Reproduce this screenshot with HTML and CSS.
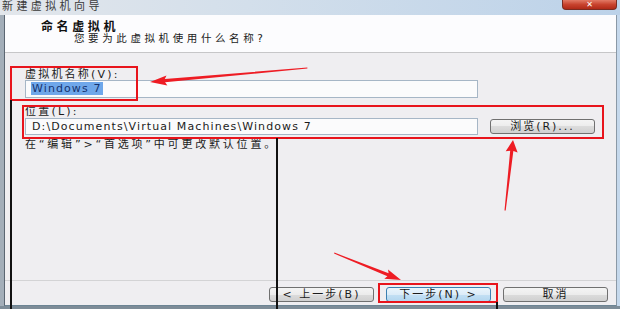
FILE: index.html
```html
<!DOCTYPE html>
<html lang="zh-CN">
<head>
    <meta charset="UTF-8">
    <meta name="viewport" content="width=device-width, initial-scale=1.0">
    <title>新建虚拟机向导</title>
    <link rel="stylesheet" href="styles.css">
</head>
<body>
    <div class="window">
        <div class="titlebar">
            <span class="title">新建虚拟机向导</span>
            <span class="close">✕</span>
        </div>

        <div class="dialog">
            <header class="head">
                <h1 class="head-title">命名虚拟机</h1>
                <p class="head-sub">您要为此虚拟机使用什么名称?</p>
            </header>

            <main class="content">
                <label class="field-label" for="vm-name">虚拟机名称(V):</label>
                <div class="input name-input" id="vm-name"><span class="sel">Windows 7</span></div>

                <label class="field-label loc-label" for="vm-loc">位置(L):</label>
                <div class="loc-row">
                    <div class="input loc-input" id="vm-loc">D:\Documents\Virtual Machines\Windows 7</div>
                    <button class="btn browse-btn">浏览(R)...</button>
                </div>

                <p class="hint">在“编辑”&gt;“首选项”中可更改默认位置。</p>
            </main>

            <footer class="footer">
                <button class="btn">&lt; 上一步(B)</button>
                <button class="btn btn-default">下一步(N) &gt;</button>
                <button class="btn">取消</button>
            </footer>
        </div>
    </div>

    <!-- annotation layer drawn over the screenshot -->
    <svg class="marks" width="620" height="309" viewBox="0 0 620 309">
        <g fill="none" stroke="#e8141c" stroke-width="2">
            <rect x="11" y="67" width="126" height="33"/>
            <rect x="23" y="106" width="580" height="32"/>
            <rect x="379" y="284" width="118" height="18"/>
        </g>
        <g fill="#ee1c24">
            <g transform="translate(150 82) rotate(174.9)">
                <polygon points="-158,-0.5 -15,-1.6 -17,-5 0,0 -17,5 -15,1.6 -158,0.5"/>
            </g>
            <g transform="translate(513 140) rotate(-83.6)">
                <polygon points="-71,-0.6 -11,-1.6 -12,-6 0,0 -12,6 -11,1.6 -71,0.6"/>
            </g>
            <g transform="translate(401 280) rotate(21.95)">
                <polygon points="-72,-0.5 -14,-1.6 -16,-5 0,0 -16,5 -14,1.6 -72,0.5"/>
            </g>
        </g>
        <g stroke="#111" stroke-width="2">
            <line x1="11" y1="100" x2="11" y2="309"/>
            <line x1="277" y1="138" x2="277" y2="309"/>
            <line x1="497" y1="302" x2="497" y2="309"/>
        </g>
    </svg>
</body>
</html>
```

FILE: styles.css
```css
* {
    margin: 0;
    padding: 0;
    box-sizing: border-box;
}

body {
    position: relative;
    width: 620px;
    height: 309px;
    overflow: hidden;
    font-family: "DejaVu Sans", "Noto Sans CJK SC", sans-serif;
    font-size: 11px;
    color: #1b1b1b;
    background: #c5d8ec;
}

.window {
    height: 309px;
    display: flex;
    flex-direction: column;
    padding: 0 3px 0 4px;
    border-bottom: 3px solid #7d8c98;
    background: linear-gradient(to right, #a3aeb9 0, #a3aeb9 4px, #c5d8ec 4px);
}

.titlebar {
    height: 15px;
    margin: 0 -3px 0 -4px;
    padding: 0 3px 0 2px;
    display: flex;
    align-items: flex-start;
    background: linear-gradient(to right, #e2e6eb, #d3dfeb 40%, #bcd2e9);
}

.title {
    line-height: 13px;
    letter-spacing: 3.4px;
    color: #3a3a3a;
}

.close {
    margin-left: auto;
    width: 55px;
    height: 10px;
    border: 1px solid #7a2c22;
    border-top: none;
    border-radius: 0 0 4px 4px;
    background: linear-gradient(#e27a66, #c8432e 50%, #b02a18);
    color: #fff;
    font-size: 8px;
    font-weight: bold;
    line-height: 9px;
    text-align: center;
}

.dialog {
    flex: 1;
    display: flex;
    flex-direction: column;
    border-left: 1px solid #5b6672;
    border-right: 1px solid #8a98a6;
    border-bottom: 1px solid #6c8494;
    background: #efeef1;
}

.head {
    height: 38px;
    padding: 6px 0 0 36px;
    background: #fcfcfe;
    border-bottom: 1px solid #c6c6c8;
}

.head-title {
    font-size: 12px;
    font-weight: bold;
    line-height: 12px;
    letter-spacing: 3.6px;
    color: #111;
}

.head-sub {
    margin: 0 0 0 33px;
    font-size: 10.5px;
    line-height: 11px;
    letter-spacing: 3.6px;
}

.content {
    flex: 1;
    padding: 16px 0 0 20px;
}

.field-label {
    display: block;
    line-height: 11px;
    letter-spacing: 2.2px;
}

.loc-label {
    margin-top: 8px;
}

.input {
    width: 453px;
    height: 18px;
    padding-left: 5px;
    border: 1px solid #a6b6c6;
    background: #fbfbfc;
    line-height: 16px;
    letter-spacing: 1.1px;
    white-space: nowrap;
}

.sel {
    display: inline-block;
    line-height: 13px;
    padding: 0 1px;
    background: #6fa7ea;
    color: #16336f;
}

.loc-row {
    margin-top: 1px;
    display: flex;
    align-items: center;
}

.loc-input {
    height: 17px;
    padding-left: 6px;
    line-height: 15px;
}

.browse-btn {
    margin-left: 12px;
    width: 106px;
}

.hint {
    margin-top: 4px;
    line-height: 11px;
    letter-spacing: 2.8px;
}

.btn {
    width: 105px;
    height: 15px;
    border: 1px solid #707070;
    border-radius: 3px;
    background: linear-gradient(#f4f4f4, #ececec 50%, #dcdcdc 50%, #d0d0d0);
    font-family: inherit;
    font-size: 11px;
    line-height: 13px;
    letter-spacing: 2px;
    color: #1b1b1b;
}

.btn-default {
    border-color: #3c7fb1;
    background: linear-gradient(#eaf5fc, #dcecf8 50%, #c4e0f4 50%, #b3d6ef);
}

.footer {
    height: 25px;
    padding: 6px 8px 0 0;
    display: flex;
    justify-content: flex-end;
    gap: 12px;
    border-top: 1px solid #d3d3d5;
}

.marks {
    position: absolute;
    left: 0;
    top: 0;
    pointer-events: none;
}
```
